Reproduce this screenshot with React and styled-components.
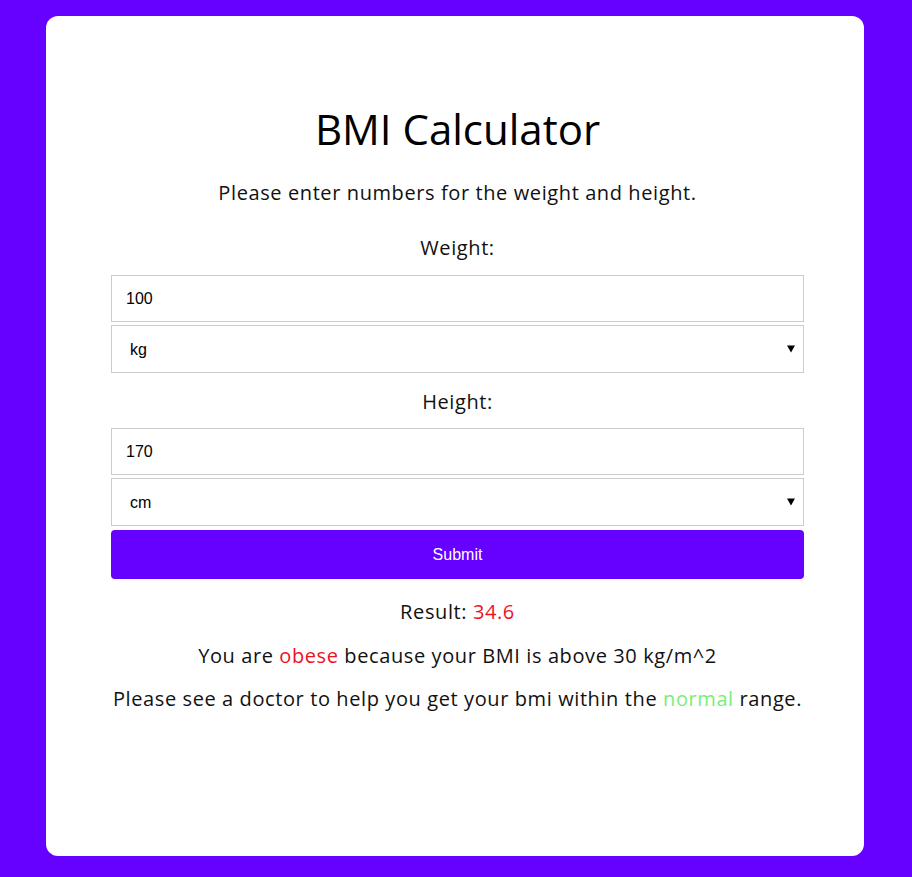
import React from "react";
import styled, { createGlobalStyle } from "styled-components";

const GlobalStyle = createGlobalStyle`
  body {
    margin: 0;
    background-color: #6600ff;
    font-family: "Open Sans", "Liberation Sans", sans-serif;
  }
`;

const Page = styled.main`
  padding: 16px 48px 21px 46px;
`;

const Card = styled.section`
  height: 840px;
  box-sizing: border-box;
  background-color: #fff;
  border-radius: 12px;
  padding: 86px 60px 0 65px;
  display: flex;
  flex-direction: column;
  align-items: stretch;
  text-align: center;
  color: #111;
`;

const Title = styled.h1`
  margin: 0;
  font-size: 42px;
  font-weight: 400;
  line-height: 54px;
  color: #000;
`;

const Text = styled.p`
  margin: ${(p) => p.$margin || "0"};
  font-size: 20px;
  line-height: 26px;
  letter-spacing: 0.6px;
`;

const Label = styled.label`
  display: block;
  margin: ${(p) => p.$margin || "0"};
  font-size: 20px;
  line-height: 26px;
  letter-spacing: 0.6px;
`;

const Field = styled.input`
  display: block;
  width: 100%;
  height: 47px;
  box-sizing: border-box;
  border: 1px solid #ccc;
  padding: 0 14px;
  font-family: "Liberation Sans", Arial, sans-serif;
  font-size: 16px;
  color: #000;
  outline: none;
`;

const SelectWrap = styled.div`
  position: relative;
  margin-top: 3px;
`;

const Select = styled.select`
  display: block;
  width: 100%;
  height: 48px;
  box-sizing: border-box;
  border: 1px solid #ccc;
  background: #fff;
  padding: 0 18px;
  font-family: "Liberation Sans", Arial, sans-serif;
  font-size: 16px;
  color: #000;
  appearance: none;
  outline: none;
`;

const Arrow = styled.span`
  position: absolute;
  right: 9px;
  top: 50%;
  transform: translateY(-50%);
  width: 0;
  height: 0;
  border-left: 4px solid transparent;
  border-right: 4px solid transparent;
  border-top: 7px solid #000;
  pointer-events: none;
`;

const Button = styled.button`
  display: block;
  width: 100%;
  height: 49px;
  margin-top: 4px;
  border: none;
  border-radius: 4px;
  background-color: #6600ff;
  color: #fff;
  font-family: "Liberation Sans", Arial, sans-serif;
  font-size: 16px;
`;

const Red = styled.span`
  color: #ee1122;
`;

const Green = styled.span`
  color: #77ee77;
`;

const Unit = ({ value, options }) => (
  <SelectWrap>
    <Select defaultValue={value}>
      {options.map((o) => (
        <option key={o}>{o}</option>
      ))}
    </Select>
    <Arrow />
  </SelectWrap>
);

export default function App() {
  return (
    <>
      <GlobalStyle />
      <Page>
        <Card>
          <Title>BMI Calculator</Title>
          <Text $margin="24px 0 0">
            Please enter numbers for the weight and height.
          </Text>
          <Label $margin="29px 0 14px">Weight:</Label>
          <Field defaultValue="100" />
          <Unit value="kg" options={["kg", "lb"]} />
          <Label $margin="16px 0 13px">Height:</Label>
          <Field defaultValue="170" />
          <Unit value="cm" options={["cm", "in"]} />
          <Button>Submit</Button>
          <Text $margin="20px 0 0">
            Result: <Red>34.6</Red>
          </Text>
          <Text $margin="18px 0 0">
            You are <Red>obese</Red> because your BMI is above 30 kg/m^2
          </Text>
          <Text $margin="17px 0 0">
            Please see a doctor to help you get your bmi within the{" "}
            <Green>normal</Green> range.
          </Text>
        </Card>
      </Page>
    </>
  );
}
